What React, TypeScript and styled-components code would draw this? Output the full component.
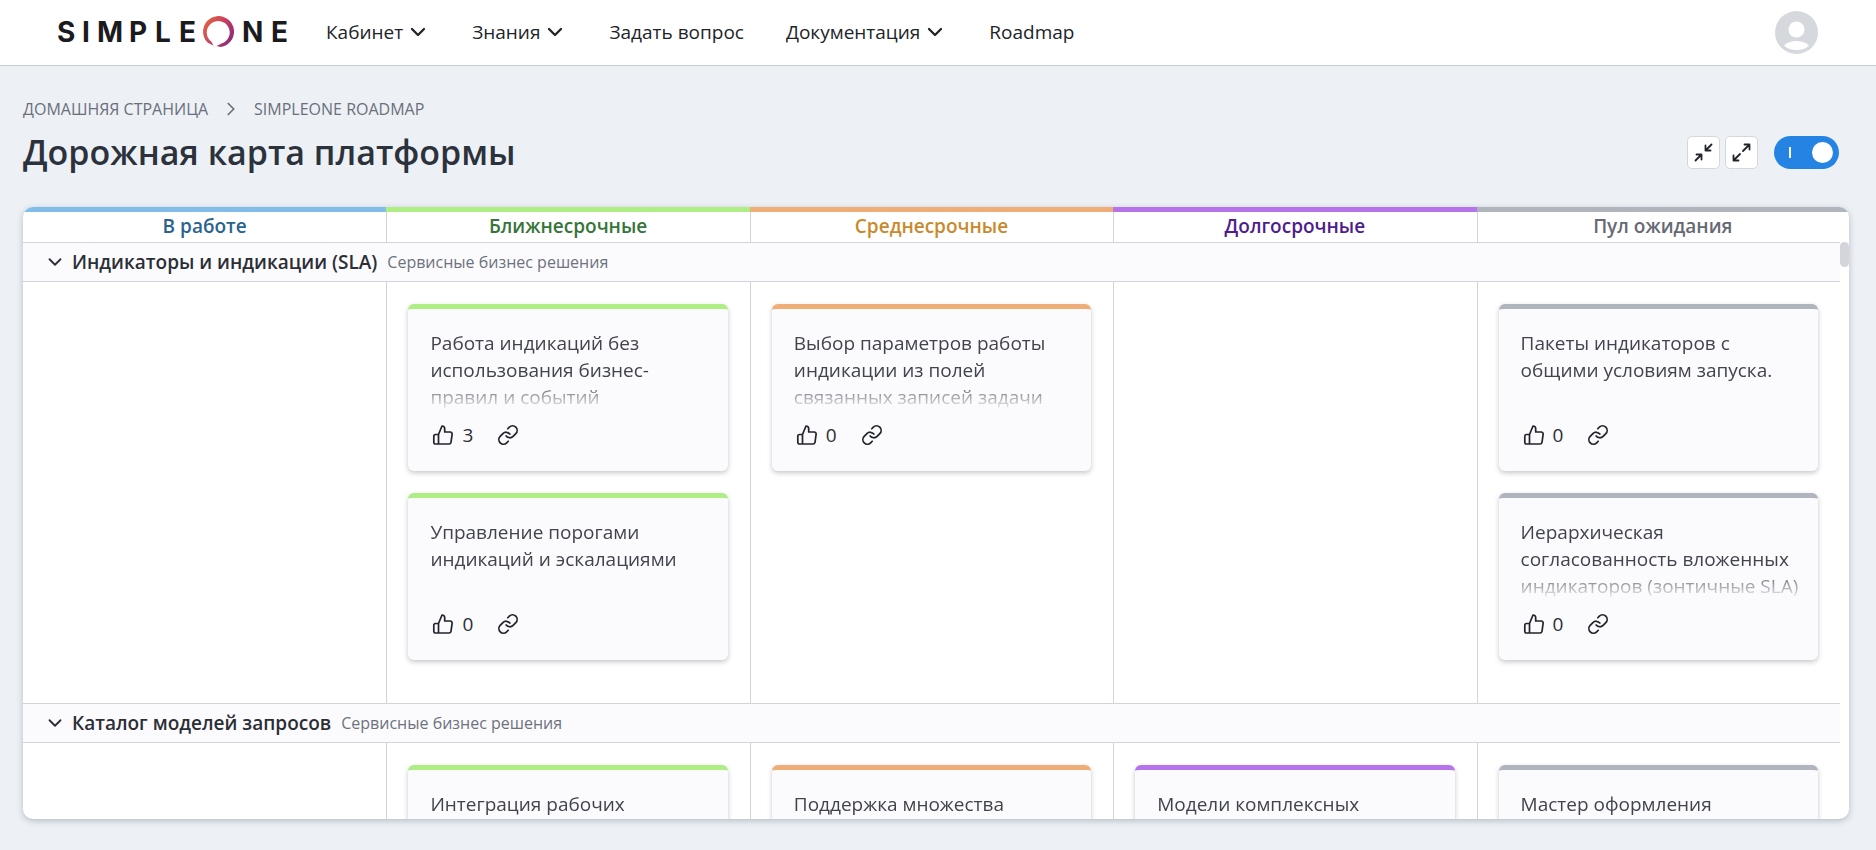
import React from 'react';
import styled, { createGlobalStyle, css } from 'styled-components';
import { ChevronDown, ChevronRight } from 'lucide-react';

const Global = createGlobalStyle`
  * { box-sizing: border-box; }
  body {
    margin: 0;
    background: #edf1f6;
    color: #2c2e35;
    font-family: 'Open Sans', 'Noto Sans', sans-serif;
  }
  #root { height: 100vh; }
  button { font: inherit; color: inherit; cursor: pointer; }
`;

const Page = styled.div`
  display: flex;
  flex-direction: column;
  height: 100%;
`;

const Header = styled.header`
  display: flex;
  align-items: center;
  flex: none;
  height: 66px;
  padding: 0 58px 1px 56px;
  background: #fff;
  border-bottom: 1px solid #c5c9d3;
`;

const LogoLink = styled.a`
  display: flex;
  margin-right: 36px;
`;

const Nav = styled.nav`
  display: flex;
  flex: 1;
  gap: 42px;
`;

const navItem = css`
  display: flex;
  align-items: center;
  gap: 3px;
  padding: 0;
  border: 0;
  background: none;
  color: #222328;
  font-size: 19px;
  font-weight: 400;
  line-height: 26px;
  text-decoration: none;
`;
const NavButton = styled.button`
  && {
    ${navItem}
  }
`;
const NavLink = styled.a`
  ${navItem}
`;

const Avatar = styled.button`
  display: flex;
  padding: 0;
  border: 0;
  background: none;
`;

const Main = styled.main`
  display: flex;
  flex-direction: column;
  flex: 1;
  min-height: 0;
  padding: 32px 27px 31px 23px;
`;

const Crumbs = styled.nav`
  display: flex;
  align-items: center;
  gap: 12px;
  line-height: 22px;
  font-size: 16px;
  color: #6a6f7a;
  text-transform: uppercase;
  a { color: inherit; text-decoration: none; }
`;

const TitleRow = styled.div`
  display: flex;
  align-items: center;
  justify-content: space-between;
  padding: 12px 10px 35px 0;
`;

const Title = styled.h1`
  margin: 0;
  font-size: 34px;
  font-weight: 600;
  line-height: 40px;
  color: #2c323c;
`;

const Tools = styled.div`
  display: flex;
  align-items: center;
  gap: 5px;
`;

const ToolButton = styled.button`
  display: grid;
  place-items: center;
  width: 33px;
  height: 33px;
  padding: 0;
  border: 1px solid #d5d7dd;
  border-radius: 5px;
  background: #fff;
`;

const Toggle = styled.input`
  appearance: none;
  display: flex;
  align-items: center;
  justify-content: space-between;
  width: 65px;
  height: 33px;
  margin: 0 0 0 11px;
  padding: 0 6px 0 15px;
  border-radius: 17px;
  background: #2583e4;
  cursor: pointer;
  &::before {
    content: '';
    width: 2px;
    height: 11px;
    background: #fff;
  }
  &::after {
    content: '';
    width: 21px;
    height: 21px;
    border-radius: 50%;
    background: #fff;
  }
  &:not(:checked) {
    flex-direction: row-reverse;
    background: #b0b5bf;
  }
`;

const Board = styled.section`
  display: flex;
  flex-direction: column;
  flex: 1;
  min-height: 0;
  overflow: hidden;
  border-radius: 10px;
  background: #fff;
  box-shadow: 0 2px 6px rgba(60, 70, 85, 0.3);
`;

const Heads = styled.div`
  display: grid;
  grid-template-columns: repeat(4, calc((100% - 9px) / 5)) 1fr;
  flex: none;
`;

const Head = styled.h2<{ $bar: string; $ink: string }>`
  margin: 0;
  padding-bottom: 2px;
  border-top: 5px solid ${(p) => p.$bar};
  color: ${(p) => p.$ink};
  font-size: 19px;
  font-weight: 600;
  line-height: 28px;
  text-align: center;
  & + & { box-shadow: inset 1px 0 #d3d4d9; }
`;

const Scroller = styled.div`
  display: flex;
  flex: 1;
  min-height: 0;
`;

const Groups = styled.div`
  flex: 1;
  min-width: 0;
  overflow: hidden;
`;

const Track = styled.div`
  flex: none;
  width: 9px;
`;

const Thumb = styled.div`
  height: 25px;
  border-radius: 5px;
  background: #d3d5db;
`;

const GroupHead = styled.button`
  display: flex;
  align-items: center;
  width: 100%;
  height: 40px;
  padding: 0 22px 0 21px;
  border: solid #d3d4d9;
  border-width: 1px 0;
  background: #fbfbfe;
  text-align: left;
`;

const GroupName = styled.span`
  margin: 0 10px 0 6px;
  font-size: 19px;
  font-weight: 600;
`;

const GroupNote = styled.span`
  font-size: 16px;
  color: #6d727d;
`;

const Cells = styled.div`
  display: grid;
  grid-template-columns: repeat(5, 1fr);
`;

const Cell = styled.div`
  display: flex;
  flex-direction: column;
  gap: 22px;
  min-width: 0;
  padding: 22px 22px 43px;
  & + & { border-left: 1px solid #d3d4d9; padding-left: 21px; }
`;

const CardBox = styled.article<{ $bar: string }>`
  height: 167px;
  padding: 21px 14px 0 22px;
  border-top: 5px solid ${(p) => p.$bar};
  border-radius: 6px;
  background: #fbfbfe;
  box-shadow: 0 2px 5px rgba(50, 55, 65, 0.28);
`;

const CardText = styled.p`
  height: 81px;
  margin: 0;
  overflow: hidden;
  color: #42444c;
  font-size: 19px;
  line-height: 27px;
  mask-image: linear-gradient(#000 50px, transparent 81px);
`;

const CardActions = styled.div`
  display: flex;
  align-items: center;
  gap: 24px;
  padding: 12px 0 0 2px;
`;

const Action = styled.button`
  display: flex;
  align-items: center;
  gap: 8px;
  padding: 0;
  border: 0;
  background: none;
  font-size: 19px;
  line-height: 24px;
`;

const Logo = () => (
  <svg width="234" height="36" viewBox="0 0 234 36" role="img" aria-label="SimpleOne">
    <defs>
      <linearGradient id="ring" x1="0" y1="0.2" x2="1" y2="0.8">
        <stop offset="0" stopColor="#e2643f" />
        <stop offset="0.5" stopColor="#c8405f" />
        <stop offset="1" stopColor="#84287a" />
      </linearGradient>
    </defs>
    <text
      x="1 26 41 73 99 123 186 215"
      y="28"
      fontFamily="Inter, sans-serif"
      fontSize="28"
      fontWeight="700"
      fill="#1b1b1f"
    >
      SIMPLENE
    </text>
    <path
      fill="url(#ring)"
      d="M164.500 33A15.500 15.500 0 1 0 151.500 28.500L157.500 31.800L155.500 27.800A11.500 11.500 0 1 1 165.500 29.500L160.500 32Z"
    />
  </svg>
);

const UserIcon = () => (
  <svg width="43" height="43" viewBox="0 0 43 43" aria-hidden="true">
    <circle cx="21.500" cy="21.500" r="21.500" fill="#d5d8dd" />
    <circle cx="21.500" cy="18.500" r="8" fill="#fff" />
    <path d="M9 34.500C13 31 17 30 21.500 30S30 31 34 34.500C31 37.500 26.500 39 21.500 39S12 37.500 9 34.500Z" fill="#fff" />
  </svg>
);

const stroke = { fill: 'none', stroke: '#22242b', strokeLinecap: 'round', strokeLinejoin: 'round' } as const;

const CollapseIcon = () => (
  <svg width="19" height="19" viewBox="0 0 19 19" {...stroke} strokeWidth="1.800" aria-hidden="true">
    <path d="M17.500 1.500 11.500 7.500M11.500 2.500V7.500H16.500M1.500 17.500 7.500 11.500M2.500 11.500H7.500V16.500" />
  </svg>
);

const ExpandIcon = () => (
  <svg width="19" height="19" viewBox="0 0 19 19" {...stroke} strokeWidth="1.800" aria-hidden="true">
    <path d="M11 8 17.500 1.500M12.500 1.500H17.500V6.500M8 11 1.500 17.500M1.500 12.500V17.500H6.500" />
  </svg>
);

const ThumbIcon = () => (
  <svg width="22" height="22" viewBox="0 0 22 22" {...stroke} strokeWidth="1.700" aria-hidden="true">
    <path d="M6.500 10.500 10 2C11.700 2 12.700 3.200 12.700 4.800V8H18.200C19.500 8 20.300 9.100 20.100 10.300L19 18.300C18.800 19.400 18 20 17 20H3.500C2.500 20 1.800 19.300 1.800 18.300V12.200C1.800 11.200 2.500 10.500 3.500 10.500H6.500V20" />
  </svg>
);

const LinkIcon = () => (
  <svg width="22" height="22" viewBox="0 0 24 24" {...stroke} strokeWidth="1.900" aria-hidden="true">
    <path d="M10 13a5 5 0 0 0 7.540.540l3-3a5 5 0 0 0-7.070-7.070l-1.720 1.710" />
    <path d="M14 11a5 5 0 0 0-7.540-.540l-3 3a5 5 0 0 0 7.070 7.070l1.710-1.710" />
  </svg>
);

const columns = [
  { name: 'В работе', bar: '#82bdea', ink: '#2a638f' },
  { name: 'Ближнесрочные', bar: '#aeee85', ink: '#36753a' },
  { name: 'Среднесрочные', bar: '#efae77', ink: '#c98a2d' },
  { name: 'Долгосрочные', bar: '#b574eb', ink: '#4f1d8c' },
  { name: 'Пул ожидания', bar: '#b0b4bd', ink: '#666973' },
];

type Item = { text: string; likes: number };
type Group = { name: string; note: string; cells: Item[][] };

const groups: Group[] = [
  {
    name: 'Индикаторы и индикации (SLA)',
    note: 'Сервисные бизнес решения',
    cells: [
      [],
      [
        { text: 'Работа индикаций без использования бизнес-правил и событий', likes: 3 },
        { text: 'Управление порогами индикаций и эскалациями', likes: 0 },
      ],
      [{ text: 'Выбор параметров работы индикации из полей связанных записей задачи', likes: 0 }],
      [],
      [
        { text: 'Пакеты индикаторов с общими условиям запуска.', likes: 0 },
        { text: 'Иерархическая согласованность вложенных индикаторов (зонтичные SLA)', likes: 0 },
      ],
    ],
  },
  {
    name: 'Каталог моделей запросов',
    note: 'Сервисные бизнес решения',
    cells: [
      [],
      [{ text: 'Интеграция рабочих', likes: 0 }],
      [{ text: 'Поддержка множества', likes: 0 }],
      [{ text: 'Модели комплексных', likes: 0 }],
      [{ text: 'Мастер оформления', likes: 0 }],
    ],
  },
];

const Card = ({ item, bar }: { item: Item; bar: string }) => (
  <CardBox $bar={bar}>
    <CardText>{item.text}</CardText>
    <CardActions>
      <Action aria-label={`Нравится: ${item.likes}`}>
        <ThumbIcon />
        {item.likes}
      </Action>
      <Action aria-label="Скопировать ссылку">
        <LinkIcon />
      </Action>
    </CardActions>
  </CardBox>
);

const MenuArrow = () => <ChevronDown size={24} strokeWidth={2.3} aria-hidden="true" />;

export default function App() {
  return (
    <Page>
      <Global />
      <Header>
        <LogoLink href="#">
          <Logo />
        </LogoLink>
        <Nav>
          <NavButton>Кабинет <MenuArrow /></NavButton>
          <NavButton>Знания <MenuArrow /></NavButton>
          <NavLink href="#">Задать вопрос</NavLink>
          <NavButton>Документация <MenuArrow /></NavButton>
          <NavLink href="#">Roadmap</NavLink>
        </Nav>
        <Avatar aria-label="Профиль">
          <UserIcon />
        </Avatar>
      </Header>
      <Main>
        <Crumbs>
          <a href="#">Домашняя страница</a>
          <ChevronRight size={22} strokeWidth={1.9} aria-hidden="true" />
          <a href="#">SimpleOne Roadmap</a>
        </Crumbs>
        <TitleRow>
          <Title>Дорожная карта платформы</Title>
          <Tools>
            <ToolButton aria-label="Свернуть все">
              <CollapseIcon />
            </ToolButton>
            <ToolButton aria-label="Развернуть все">
              <ExpandIcon />
            </ToolButton>
            <Toggle type="checkbox" role="switch" aria-label="Группировка" defaultChecked />
          </Tools>
        </TitleRow>
        <Board>
          <Heads>
            {columns.map((c) => (
              <Head key={c.name} $bar={c.bar} $ink={c.ink}>{c.name}</Head>
            ))}
          </Heads>
          <Scroller>
            <Groups>
              {groups.map((g) => (
                <section key={g.name}>
                  <GroupHead>
                    <ChevronDown size={22} strokeWidth={2} aria-hidden="true" />
                    <GroupName>{g.name}</GroupName>
                    <GroupNote>{g.note}</GroupNote>
                  </GroupHead>
                  <Cells>
                    {g.cells.map((cell, i) => (
                      <Cell key={columns[i].name}>
                        {cell.map((item) => (
                          <Card key={item.text} item={item} bar={columns[i].bar} />
                        ))}
                      </Cell>
                    ))}
                  </Cells>
                </section>
              ))}
            </Groups>
            <Track>
              <Thumb />
            </Track>
          </Scroller>
        </Board>
      </Main>
    </Page>
  );
}
